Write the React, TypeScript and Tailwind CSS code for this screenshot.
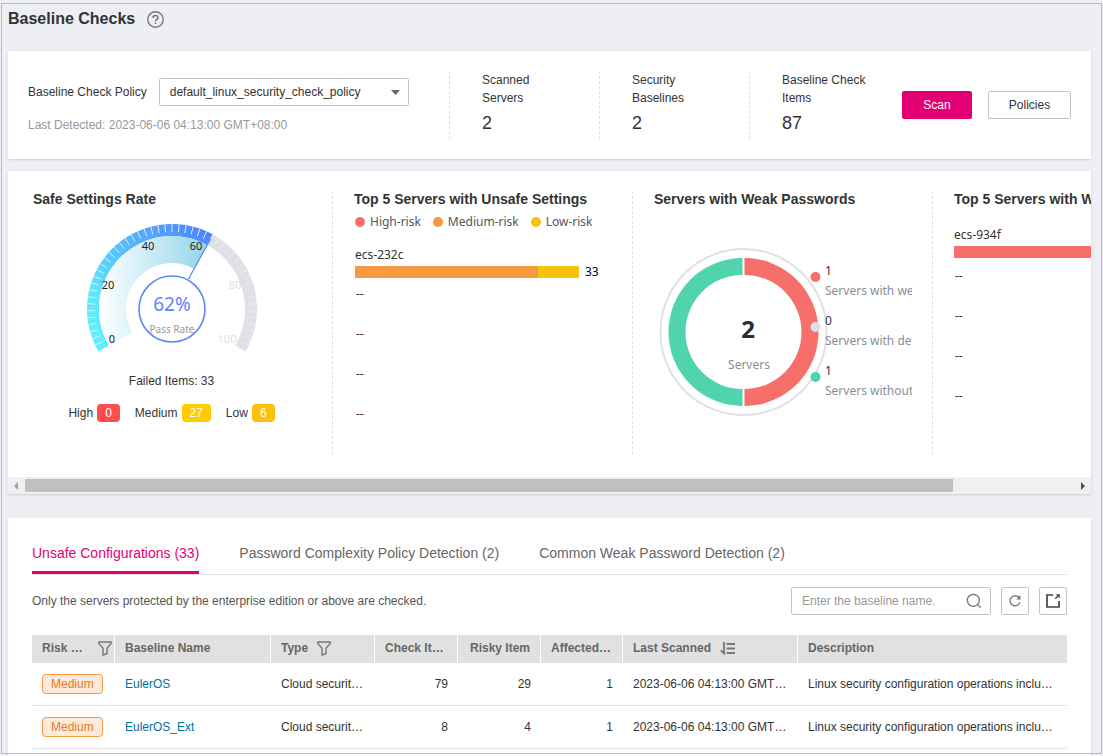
import { ReactNode } from "react";

const CHART_FONT = "font-['Noto_Sans','Open_Sans',sans-serif]";

function polar(cx: number, cy: number, r: number, percent: number): [number, number] {
  const angle = ((210 - percent * 2.4) * Math.PI) / 180;
  return [cx + r * Math.cos(angle), cy - r * Math.sin(angle)];
}

function sector(cx: number, cy: number, outer: number, inner: number, from: number, to: number) {
  const large = (to - from) * 2.4 > 180 ? 1 : 0;
  const [ax, ay] = polar(cx, cy, outer, from);
  const [bx, by] = polar(cx, cy, outer, to);
  const [dx, dy] = polar(cx, cy, inner, to);
  const [ex, ey] = polar(cx, cy, inner, from);
  return `M${ax} ${ay}A${outer} ${outer} 0 ${large} 1 ${bx} ${by}L${dx} ${dy}A${inner} ${inner} 0 ${large} 0 ${ex} ${ey}Z`;
}

function Gauge() {
  const cx = 90;
  const cy = 89;
  const [lx1, ly1] = polar(cx, cy, 34, 62);
  const [lx2, ly2] = polar(cx, cy, 80, 62);
  const labels = [
    { t: "0", x: 30, y: 123, on: true },
    { t: "20", x: 26, y: 69, on: true },
    { t: "40", x: 66, y: 30, on: true },
    { t: "60", x: 114, y: 30, on: true },
    { t: "80", x: 153, y: 69, on: false },
    { t: "100", x: 145, y: 123, on: false },
  ];
  return (
    <svg width="180" height="140" viewBox="0 0 180 140" className={CHART_FONT} role="img" aria-label="Pass rate 62%">
      <defs>
        <linearGradient id="ring" x1="0" y1="1" x2="1" y2="0">
          <stop offset="0" stopColor="#5cf5ff" />
          <stop offset="0.25" stopColor="#5ce8ff" />
          <stop offset="1" stopColor="#4d7dff" />
        </linearGradient>
        <linearGradient id="fan" x1="0" y1="0" x2="1" y2="0">
          <stop offset="0" stopColor="#ffffff" />
          <stop offset="1" stopColor="#93d5ea" />
        </linearGradient>
      </defs>
      <path d={sector(cx, cy, 85, 73, 62, 100)} fill="#dfe1e6" />
      <path d={sector(cx, cy, 85, 73, 0, 62)} fill="url(#ring)" />
      <path d={sector(cx, cy, 73, 46, 0, 62)} fill="url(#fan)" />
      {Array.from({ length: 51 }, (_, i) => {
        const [x1, y1] = polar(cx, cy, 85, i * 2);
        const [x2, y2] = polar(cx, cy, 77, i * 2);
        return <line key={i} x1={x1} y1={y1} x2={x2} y2={y2} stroke="#e9ecf2" strokeWidth="1" />;
      })}
      <line x1={lx1} y1={ly1} x2={lx2} y2={ly2} stroke="#5b86fb" strokeWidth="1.2" />
      <circle cx={cx} cy={cy} r="33" fill="#fff" stroke="#5b86fb" strokeWidth="1.6" />
      {labels.map((l) => (
        <text key={l.t} x={l.x} y={l.y} fontSize="11" textAnchor="middle" fill={l.on ? "#222" : "#dfe1e6"}>
          {l.t}
        </text>
      ))}
      <text x={cx} y="91" fontSize="19" textAnchor="middle" fill="#5b86fb">
        62%
      </text>
      <text x={cx} y="113" fontSize="10" textAnchor="middle" fill="#999">
        Pass Rate
      </text>
    </svg>
  );
}

function Donut() {
  const items = [
    { n: "1", t: "Servers with weak passwords", c: "#f66f6a" },
    { n: "0", t: "Servers with detection disabled", c: "#dfe1e6" },
    { n: "1", t: "Servers without weak passwords", c: "#50d4ab" },
  ];
  return (
    <svg width="258" height="180" viewBox="0 0 258 180" className={`block overflow-hidden ${CHART_FONT}`} role="img" aria-label="2 servers">
      <circle cx="89.500" cy="90" r="83" fill="none" stroke="#dfe1e6" strokeWidth="2" />
      <path d="M90.500 16A74 74 0 0 1 90.500 164V147A57 57 0 0 0 90.500 33Z" fill="#f66f6a" />
      <path d="M88.500 16A74 74 0 0 0 88.500 164V147A57 57 0 0 1 88.500 33Z" fill="#50d4ab" />
      <text x="94" y="96" fontSize="24" fontWeight="700" textAnchor="middle" fill="#252b3a">
        2
      </text>
      <text x="95" y="127" fontSize="12" textAnchor="middle" fill="#8a8e99">
        Servers
      </text>
      {items.map((it, i) => (
        <g key={it.t}>
          <circle cx="161.500" cy={35 + i * 50} r="5" fill={it.c} />
          <text x="171" y={33 + i * 50} fontSize="12" fill="#333">
            {it.n}
          </text>
          <text x="171" y={53 + i * 50} fontSize="12" fill="#8a8e99">
            {it.t}
          </text>
        </g>
      ))}
    </svg>
  );
}

function Panel({ title, last, children }: { title: string; last?: boolean; children: ReactNode }) {
  return (
    <section className="flex w-[300px] shrink-0 pl-[21px] first:pl-0">
      <div className="flex min-w-0 flex-1 flex-col">
        <h2 className="text-sm leading-4 font-bold whitespace-nowrap">{title}</h2>
        {children}
      </div>
      {!last && <DashedLine />}
    </section>
  );
}

function DashedLine() {
  return (
    <span className="w-px shrink-0 self-stretch bg-[repeating-linear-gradient(to_bottom,#dfe1e6_0_3px,transparent_3px_5px)]" />
  );
}

function EmptyRows() {
  return (
    <div className="flex flex-col">
      {[0, 1, 2, 3].map((i) => (
        <span key={i} className="h-10 pl-px leading-8">
          --
        </span>
      ))}
    </div>
  );
}

function Stat({ label, value }: { label: string; value: string }) {
  return (
    <div className="flex h-[68px] w-[150px] shrink-0">
      <DashedLine />
      <div className="flex flex-col pr-8 pl-8">
        <span className="leading-[18px]">{label}</span>
        <span className="mt-1 text-lg leading-6">{value}</span>
      </div>
    </div>
  );
}

function Count({ label, value, className }: { label: string; value: string; className: string }) {
  return (
    <span className="flex items-center gap-1">
      {label}
      <b className={`h-[18px] rounded px-2 leading-[18px] font-normal text-white ${className}`}>{value}</b>
    </span>
  );
}

function FilterIcon() {
  return (
    <svg width="14" height="15" viewBox="0 0 14 15" fill="none" stroke="#777" strokeWidth="1.4" strokeLinejoin="round" className="shrink-0">
      <path d="M.8 1h12.400v1.400L9 7.300v5.200l-4 1.700V7.300L.8 2.400z" />
    </svg>
  );
}

function SortIcon() {
  return (
    <svg width="16" height="14" viewBox="0 0 16 14" fill="none" stroke="#777" strokeWidth="1.800" className="shrink-0">
      <path d="M4 1V12.500L.8 9.300M6.500 3h8.500M6.500 7.500h8.500M6.500 12h8.500" />
    </svg>
  );
}

const columns: { label: string; width: string; align?: string; icon?: ReactNode }[] = [
  { label: "Risk Level", width: "w-[83px]", icon: <FilterIcon /> },
  { label: "Baseline Name", width: "w-[156px]" },
  { label: "Type", width: "w-[104px]", icon: <FilterIcon /> },
  { label: "Check Items", width: "w-[83px]", align: "text-right" },
  { label: "Risky Item", width: "w-[83px]", align: "text-right" },
  { label: "Affected Servers", width: "w-[82px]", align: "text-right" },
  { label: "Last Scanned", width: "w-[175px]", icon: <SortIcon /> },
  { label: "Description", width: "" },
];

const rows = [
  { name: "EulerOS", check: 79, risky: 29 },
  { name: "EulerOS_Ext", check: 8, risky: 4 },
];

const tabs = ["Unsafe Configurations (33)", "Password Complexity Policy Detection (2)", "Common Weak Password Detection (2)"];

export default function App() {
  return (
    <div className="flex min-h-screen flex-col bg-[#eeeff5] pr-3 pl-2 font-['Liberation_Sans',Arial,sans-serif] text-xs text-[#333]">
      <div className="pointer-events-none fixed top-[3px] right-px bottom-[2px] left-px z-10 border border-[#bbbcc2]" />

      <header className="flex h-[51px] items-start gap-3 pt-[9px]">
        <h1 className="text-base leading-5 font-bold">Baseline Checks</h1>
        <button aria-label="Help" className="pt-0.5">
          <svg width="17" height="17" viewBox="0 0 16 16" fill="none" stroke="#777" strokeWidth="1.300">
            <circle cx="8" cy="8" r="7.300" />
            <path d="M5.700 6.500C5.700 5 6.700 4.200 8 4.200s2.300.8 2.300 2.100c0 1.500-2.300 1.600-2.300 3.300M8 10.800v1.500" strokeWidth="1.500" />
          </svg>
        </button>
      </header>

      <section className="flex items-center bg-white p-5 shadow-sm">
        <div className="min-w-0 flex-1 pt-px">
          <div className="flex items-center gap-3">
            <label htmlFor="policy">Baseline Check Policy</label>
            <div className="relative w-[250px]">
              <select id="policy" className="h-7 w-full appearance-none rounded-xs border border-[#c2c4cc] bg-white pr-6 pl-2.5">
                <option>default_linux_security_check_policy</option>
              </select>
              <svg width="9" height="5" viewBox="0 0 9 5" className="pointer-events-none absolute top-3 right-[9px]" fill="#666">
                <path d="M0 0h9L4.500 5z" />
              </svg>
            </div>
          </div>
          <p className="mt-[11px] leading-4 text-[#999]">Last Detected: 2023-06-06 04:13:00 GMT+08:00</p>
        </div>
        <div className="flex">
          <Stat label="Scanned Servers" value="2" />
          <Stat label="Security Baselines" value="2" />
          <Stat label="Baseline Check Items" value="87" />
        </div>
        <div className="ml-[3px] flex gap-4">
          <button className="h-7 w-[70px] rounded-xs bg-[#e20074] text-white">Scan</button>
          <button className="h-7 w-[83px] rounded-xs border border-[#c2c4cc] bg-white">Policies</button>
        </div>
      </section>

      <section className="mt-3 bg-white shadow-sm">
        <div className="flex h-[306px] overflow-hidden pt-5 pb-5 pl-[25px]">
          <Panel title="Safe Settings Rate">
            <div className="mt-[13px] flex h-[140px] justify-center pr-[22px]">
              <Gauge />
            </div>
            <p className="mt-[11px] pr-[22px] text-center leading-5">Failed Items: 33</p>
            <div className="mt-[13px] flex justify-center gap-[15px] pr-[22px]">
              <Count label="High" value="0" className="bg-[#ff4c4c]" />
              <Count label="Medium" value="27" className="bg-[#fc0]" />
              <Count label="Low" value="6" className="bg-[#fac20a]" />
            </div>
          </Panel>
          <Panel title="Top 5 Servers with Unsafe Settings">
            <div className={`mt-1.5 flex gap-3 pl-px leading-[18px] text-[#555] ${CHART_FONT}`}>
              <span className="flex items-center gap-[5px]">
                <i className="size-2.5 rounded-full bg-[#f66f6a]" />
                High-risk
              </span>
              <span className="flex items-center gap-[5px]">
                <i className="size-2.5 rounded-full bg-[#fa9841]" />
                Medium-risk
              </span>
              <span className="flex items-center gap-[5px]">
                <i className="size-2.5 rounded-full bg-[#fac20a]" />
                Low-risk
              </span>
            </div>
            <div className={`mt-[13px] pl-px ${CHART_FONT}`}>
              <p className="leading-[22px]">ecs-232c</p>
              <div className="flex h-3 items-center">
                <i className="h-3 w-[183px] bg-[#fa9841]" />
                <i className="h-3 w-[41px] bg-[#fac20a]" />
                <span className="pl-1.5 text-black">33</span>
              </div>
              <EmptyRows />
            </div>
          </Panel>
          <Panel title="Servers with Weak Passwords">
            <div className="mt-[35px]">
              <Donut />
            </div>
          </Panel>
          <Panel title="Top 5 Servers with Weak Passwords" last>
            <div className={`mt-[17px] ${CHART_FONT}`}>
              <p className="leading-[22px]">ecs-934f</p>
              <i className="mb-0.5 block h-3 w-[224px] bg-[#f66f6a]" />
              <EmptyRows />
            </div>
          </Panel>
        </div>
        <div className="flex h-[17px] items-center bg-[#f0f0f0]">
          <svg width="17" height="17" viewBox="0 0 17 17" fill="#a0a0a0">
            <path d="M10 5v8L6 9z" />
          </svg>
          <div className="flex-1">
            <div className="h-[13px] w-[88.5%] bg-[#c0c0c0]" />
          </div>
          <svg width="17" height="17" viewBox="0 0 17 17" fill="#505050">
            <path d="M7 5v8l4-4z" />
          </svg>
        </div>
      </section>

      <section className="mt-6 flex-1 bg-white px-6 pt-[25px] shadow-sm">
        <div role="tablist" className="flex gap-10 border-b border-[#dfe1e6] text-sm text-[#666]">
          {tabs.map((t, i) => (
            <button
              key={t}
              role="tab"
              aria-selected={i === 0}
              className={i === 0 ? "h-[31px] border-b-3 border-[#e20074] pb-2 text-[#e20074]" : "h-[31px] border-b-3 border-transparent pb-2"}
            >
              {t}
            </button>
          ))}
        </div>

        <div className="mt-3 flex items-center gap-2.5">
          <p className="flex-1 text-[#555]">Only the servers protected by the enterprise edition or above are checked.</p>
          <div className="flex h-7 w-[200px] items-center rounded-xs border border-[#c2c4cc] pr-2 pl-2.5">
            <input aria-label="Baseline name" placeholder="Enter the baseline name." className="w-full min-w-0 outline-none placeholder:text-[#999]" />
            <svg width="16" height="16" viewBox="0 0 16 16" fill="none" stroke="#777" strokeWidth="1.300" className="shrink-0">
              <circle cx="7.300" cy="7.300" r="6" />
              <path d="M11.600 11.600l3.200 3.200" />
            </svg>
          </div>
          <button aria-label="Refresh" className="flex size-7 items-center justify-center rounded-xs border border-[#c2c4cc]">
            <svg width="12" height="12" viewBox="0 0 12 12" fill="none" stroke="#666" strokeWidth="1.200">
              <path d="M10.300 3.200A5 5 0 1 0 10.800 7.400M10.800.8v3.200H7.600" />
            </svg>
          </button>
          <button aria-label="Export" className="flex size-7 items-center justify-center rounded-xs border border-[#c2c4cc]">
            <svg width="14" height="14" viewBox="0 0 14 14" fill="none" stroke="#444" strokeWidth="1.700">
              <path d="M7 1H1v12h12V7" />
              <path d="M9.300 4.700L12 2" strokeWidth="1.400" />
              <path d="M9.800.2h4v4z" fill="#444" stroke="none" />
            </svg>
          </button>
        </div>

        <table className="mt-5 w-full table-fixed border-separate border-spacing-0 text-left">
          <thead>
            <tr className="h-7 bg-[#e1e1e1] text-[#666]">
              {columns.map((c) => (
                <th
                  key={c.label}
                  className={`border-r border-white pb-0.5 pl-2.5 last:border-r-0 ${c.width} ${c.align ?? ""} ${c.icon ? "pr-0.5" : "pr-2.5"}`}
                >
                  <span className={c.icon ? "flex items-center gap-[9px]" : "block truncate"}>
                    {c.icon ? <span className="truncate">{c.label}</span> : c.label}
                    {c.icon}
                  </span>
                </th>
              ))}
            </tr>
          </thead>
          <tbody>
            {rows.map((r) => (
              <tr key={r.name} className="h-[43px] *:border-b *:border-[#dfe1e6]">
                <td className="pl-2.5">
                  <span className="inline-block h-5 rounded border border-[#fa9841] bg-[#fdeadb] px-2 leading-[18px] text-[#e37d29]">Medium</span>
                </td>
                <td className="px-2.5">
                  <a href="#" className="text-[#00709f]">
                    {r.name}
                  </a>
                </td>
                <td className="truncate px-2.5">Cloud security practice</td>
                <td className="px-2.5 text-right">{r.check}</td>
                <td className="px-2.5 text-right">{r.risky}</td>
                <td className="px-2.5 text-right">1</td>
                <td className="truncate px-2.5">2023-06-06 04:13:00 GMT+08:00</td>
                <td className="truncate px-2.5">Linux security configuration operations include system settings</td>
              </tr>
            ))}
          </tbody>
        </table>
      </section>
    </div>
  );
}
